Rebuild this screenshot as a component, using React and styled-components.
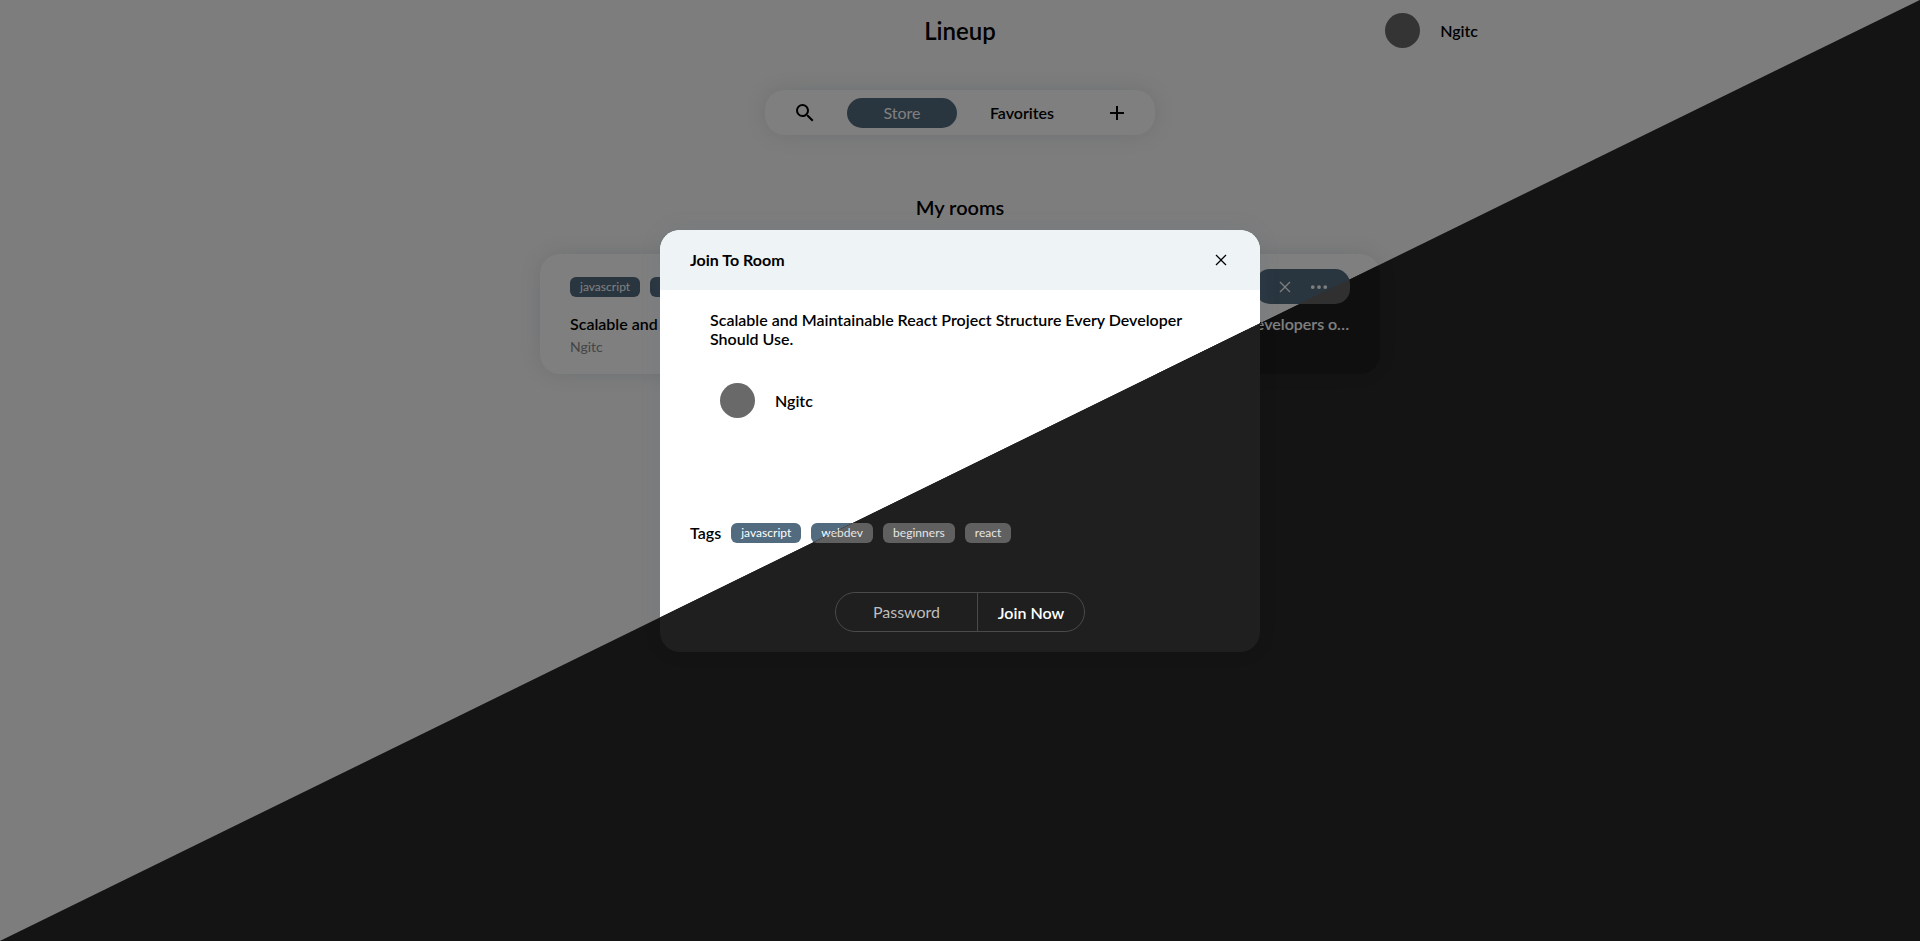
import React from 'react';
import styled, { ThemeProvider, createGlobalStyle } from 'styled-components';
import { MdSearch, MdAdd } from 'react-icons/md';
import { VscClose } from 'react-icons/vsc';
import { BsThreeDots } from 'react-icons/bs';

const lightTheme = {
  page: '#fafafa',
  surface: '#ffffff',
  header: '#eef3f6',
  text: '#000000',
  muted: '#8a8a8a',
  placeholder: '#757575',
  accent: '#526b7e',
  accentText: '#ffffff',
  avatar: '#696969',
  line: '#d0d0d0',
  shadow: '0 0 20px rgba(82, 107, 126, 0.16)',
};

const darkTheme = {
  page: '#282828',
  surface: '#1f1f1f',
  header: '#262626',
  text: '#ffffff',
  muted: '#8a8a8a',
  placeholder: '#bdbdbd',
  accent: '#606060',
  accentText: '#e6e6e6',
  avatar: '#696969',
  line: '#4a4a4a',
  shadow: '0 0 20px rgba(0, 0, 0, 0.07)',
};

const GlobalStyle = createGlobalStyle`
  * { box-sizing: border-box; }
  html, body, #root { height: 100%; }
  body { margin: 0; overflow: hidden; font-family: Lato, "Liberation Sans", sans-serif; }
  h1, h2, h3, p { margin: 0; font-weight: 600; }
  button, input { font: inherit; color: inherit; background: none; border: 0; padding: 0; }
`;

const Stage = styled.div`
  position: relative;
  height: 100vh;
  overflow: hidden;
`;

const Layer = styled.div`
  position: absolute;
  inset: 0;
  clip-path: ${(p) => (p.$diagonal ? 'polygon(100% 0, 100% 100%, 0 100%)' : 'none')};
`;

const Page = styled.div`
  height: 100%;
  background: ${(p) => p.theme.page};
  color: ${(p) => p.theme.text};
`;

const Header = styled.header`
  display: grid;
  grid-template-columns: 1fr auto 1fr;
  align-items: center;
  width: 1110px;
  height: 61px;
  margin: 0 auto;
`;

const Brand = styled.h1`
  grid-column: 2;
  padding-top: 1px;
  font-size: 24px;
  line-height: 30px;
`;

const User = styled.div`
  display: flex;
  align-items: center;
  gap: 20px;
  justify-self: ${(p) => (p.$end ? 'end' : 'start')};
  margin-right: ${(p) => (p.$end ? '37px' : '0')};
  font-size: 16px;
  font-weight: 600;
`;

const Avatar = styled.span`
  width: 35px;
  height: 35px;
  border-radius: 50%;
  background: ${(p) => p.theme.avatar};
`;

const Nav = styled.nav`
  display: flex;
  align-items: center;
  width: 390px;
  height: 45px;
  margin: 29px auto 0;
  padding: 1px 26px 0 28px;
  border-radius: 20px;
  background: ${(p) => p.theme.surface};
  box-shadow: ${(p) => p.theme.shadow};
`;

const IconButton = styled.button`
  display: flex;
  font-size: ${(p) => p.$size}px;
`;

const NavTab = styled.button`
  width: 110px;
  height: 30px;
  padding-bottom: 2px;
  border-radius: 15px;
  font-size: 16px;
  font-weight: ${(p) => (p.$active ? 400 : 600)};
  background: ${(p) => (p.$active ? p.theme.accent : 'transparent')};
  color: ${(p) => (p.$active ? p.theme.accentText : p.theme.text)};
`;

const NavTabs = styled.div`
  display: flex;
  gap: 10px;
  margin: 0 28px 0 30px;
`;

const SectionTitle = styled.h2`
  margin: 60px 0 35px;
  font-size: 20px;
  line-height: 24px;
  text-align: center;
`;

const Rooms = styled.main`
  display: grid;
  grid-template-columns: 400px 400px;
  gap: 40px;
  justify-content: center;
`;

const RoomCard = styled.article`
  height: 120px;
  padding: 15px 30px;
  border-radius: 20px;
  background: ${(p) => p.theme.surface};
  box-shadow: ${(p) => p.theme.shadow};
`;

const CardTop = styled.div`
  display: flex;
  align-items: center;
  justify-content: space-between;
  height: 35px;
`;

const TagList = styled.div`
  display: flex;
  gap: 10px;
`;

const Tag = styled.span`
  height: 20px;
  padding: 0 10px;
  border-radius: 6px;
  font-size: 12px;
  letter-spacing: 0.03px;
  line-height: 19px;
  background: ${(p) => p.theme.accent};
  color: ${(p) => p.theme.accentText};
`;

const Actions = styled.div`
  display: flex;
  align-items: center;
  gap: 14px;
  height: 35px;
  padding: 0 21px 0 20px;
  border-radius: 15px;
  background: ${(p) => p.theme.accent};
  color: ${(p) => p.theme.accentText};
`;

const RoomTitle = styled.h3`
  margin-top: 10px;
  overflow: hidden;
  font-size: 16px;
  line-height: 20px;
  white-space: nowrap;
  text-overflow: ellipsis;
`;

const Owner = styled.p`
  margin-top: 4px;
  font-size: 14px;
  font-weight: 400;
  line-height: 17px;
  color: ${(p) => p.theme.muted};
`;

const Backdrop = styled.div`
  position: absolute;
  inset: 0;
  display: flex;
  justify-content: center;
  align-items: flex-start;
  padding-top: 230px;
  background: rgba(0, 0, 0, 0.5);
`;

const Dialog = styled.section`
  width: 600px;
  height: 422px;
  border-radius: 20px;
  overflow: hidden;
  background: ${(p) => p.theme.surface};
  color: ${(p) => p.theme.text};
  box-shadow: ${(p) => p.theme.shadow};
`;

const DialogHeader = styled.header`
  display: flex;
  align-items: center;
  justify-content: space-between;
  height: 60px;
  padding: 0 29px 1px 30px;
  background: ${(p) => p.theme.header};
`;

const DialogHeading = styled.h2`
  font-size: 16px;
  font-weight: 700;
  line-height: 20px;
`;

const DialogBody = styled.div`
  padding: 20px 50px 0;
`;

const DialogTitle = styled.p`
  font-size: 16px;
  line-height: 19px;
`;

const Host = styled.div`
  padding: 35px 10px 0;
`;

const TagRow = styled.div`
  display: flex;
  align-items: center;
  gap: 10px;
  height: 20px;
  margin-top: 105px;
  padding: 0 30px;
  font-size: 16px;
  font-weight: 600;
`;

const TagLabel = styled.span`
  padding-bottom: 1px;
`;

const DialogTags = styled(TagList)`
  font-weight: 400;
`;

const JoinForm = styled.div`
  display: flex;
  width: 250px;
  height: 40px;
  margin: 49px auto 0;
  border: 1px solid ${(p) => p.theme.line};
  border-radius: 20px;
`;

const PasswordInput = styled.input`
  width: 142px;
  padding-bottom: 2px;
  border-right: 1px solid ${(p) => p.theme.line};
  text-align: center;
  outline: none;
  &::placeholder { color: ${(p) => p.theme.placeholder}; opacity: 1; }
`;

const JoinButton = styled.button`
  flex: 1;
  font-size: 16px;
  font-weight: 600;
`;

const dialogTags = ['javascript', 'webdev', 'beginners', 'react'];

function Room({ title, tags }) {
  return (
    <RoomCard>
      <CardTop>
        <TagList>
          {tags.map((tag) => <Tag key={tag}>{tag}</Tag>)}
        </TagList>
        <Actions>
          <IconButton $size={20}><VscClose /></IconButton>
          <IconButton $size={20}><BsThreeDots /></IconButton>
        </Actions>
      </CardTop>
      <RoomTitle>{title}</RoomTitle>
      <Owner>Ngitc</Owner>
    </RoomCard>
  );
}

function Screen() {
  return (
    <Page>
      <Header>
        <Brand>Lineup</Brand>
        <User $end><Avatar />Ngitc</User>
      </Header>
      <Nav>
        <IconButton $size={24}><MdSearch /></IconButton>
        <NavTabs>
          <NavTab $active>Store</NavTab>
          <NavTab>Favorites</NavTab>
        </NavTabs>
        <IconButton $size={24}><MdAdd /></IconButton>
      </Nav>
      <SectionTitle>My rooms</SectionTitle>
      <Rooms>
        <Room title="Scalable and Maintainable React Project" tags={['javascript', 'webdev']} />
        <Room title="9 Useful GitHub Repositories for Developers of the web" tags={['webdev']} />
      </Rooms>
      <Backdrop>
        <Dialog>
          <DialogHeader>
            <DialogHeading>Join To Room</DialogHeading>
            <IconButton $size={20}><VscClose /></IconButton>
          </DialogHeader>
          <DialogBody>
            <DialogTitle>Scalable and Maintainable React Project Structure Every Developer Should Use.</DialogTitle>
            <Host>
              <User><Avatar />Ngitc</User>
            </Host>
          </DialogBody>
          <TagRow>
            <TagLabel>Tags</TagLabel>
            <DialogTags>
              {dialogTags.map((tag) => <Tag key={tag}>{tag}</Tag>)}
            </DialogTags>
          </TagRow>
          <JoinForm>
            <PasswordInput placeholder="Password" />
            <JoinButton>Join Now</JoinButton>
          </JoinForm>
        </Dialog>
      </Backdrop>
    </Page>
  );
}

export default function App() {
  return (
    <Stage>
      <GlobalStyle />
      <ThemeProvider theme={lightTheme}>
        <Layer><Screen /></Layer>
      </ThemeProvider>
      <ThemeProvider theme={darkTheme}>
        <Layer $diagonal aria-hidden="true"><Screen /></Layer>
      </ThemeProvider>
    </Stage>
  );
}
